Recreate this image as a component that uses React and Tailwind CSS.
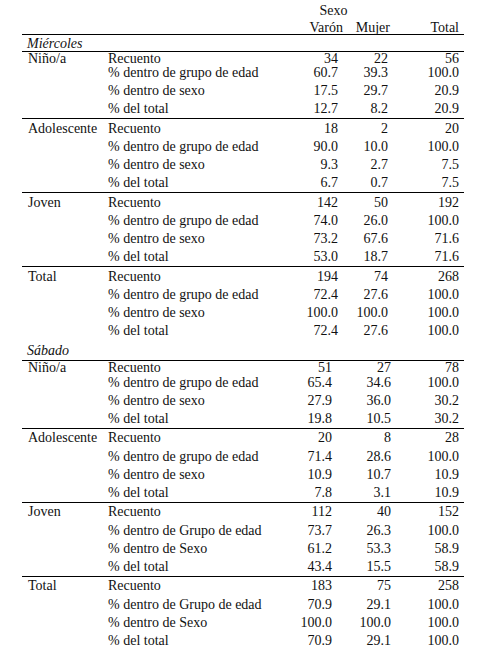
import React from 'react';

const lower = ['Recuento', '% dentro de grupo de edad', '% dentro de sexo', '% del total'];
const upper = ['Recuento', '% dentro de Grupo de edad', '% dentro de Sexo', '% del total'];

const sections = [
    {
        title: 'Miércoles',
        titleRow: 'h-[16px]',
        pad: { v: 'pr-[5px]', m: 'pr-[9px]' },
        firstH: 'h-[11.25px]',
        groups: [
            { name: 'Niño/a', labels: lower, values: [['34', '22', '56'], ['60.7', '39.3', '100.0'], ['17.5', '29.7', '20.9'], ['12.7', '8.2', '20.9']] },
            { name: 'Adolescente', labels: lower, values: [['18', '2', '20'], ['90.0', '10.0', '100.0'], ['9.3', '2.7', '7.5'], ['6.7', '0.7', '7.5']] },
            { name: 'Joven', labels: lower, values: [['142', '50', '192'], ['74.0', '26.0', '100.0'], ['73.2', '67.6', '71.6'], ['53.0', '18.7', '71.6']] },
            { name: 'Total', labels: lower, values: [['194', '74', '268'], ['72.4', '27.6', '100.0'], ['100.0', '100.0', '100.0'], ['72.4', '27.6', '100.0']] },
        ],
    },
    {
        title: 'Sábado',
        titleRow: 'h-[20px]',
        pad: { v: 'pr-[11px]', m: 'pr-[6px]' },
        firstH: 'h-[12px]',
        groups: [
            { name: 'Niño/a', labels: lower, values: [['51', '27', '78'], ['65.4', '34.6', '100.0'], ['27.9', '36.0', '30.2'], ['19.8', '10.5', '30.2']] },
            { name: 'Adolescente', labels: lower, values: [['20', '8', '28'], ['71.4', '28.6', '100.0'], ['10.9', '10.7', '10.9'], ['7.8', '3.1', '10.9']] },
            { name: 'Joven', labels: upper, values: [['112', '40', '152'], ['73.7', '26.3', '100.0'], ['61.2', '53.3', '58.9'], ['43.4', '15.5', '58.9']] },
            { name: 'Total', labels: upper, values: [['183', '75', '258'], ['70.9', '29.1', '100.0'], ['100.0', '100.0', '100.0'], ['70.9', '29.1', '100.0']] },
        ],
    },
];

const Group = ({ group, pad, first, firstH }) => (
    <div className="border-t border-black">
        {group.labels.map((label, i) => (
            <div
                key={i}
                className={`flex ${first && i === 0 ? `${firstH} items-start` : 'h-[18.25px] items-center'}`}
            >
                <div className="w-[85px] pl-[6px]">{i === 0 ? group.name : ''}</div>
                <div className="w-[170px] pl-[1px]">{label}</div>
                <div className={`w-[66px] text-right ${pad.v}`}>{group.values[i][0]}</div>
                <div className={`w-[54px] text-right ${pad.m}`}>{group.values[i][1]}</div>
                <div className="w-[67px] text-right pr-[5px]">{group.values[i][2]}</div>
            </div>
        ))}
    </div>
);

export default function App() {
    return (
        <div className="w-[485px] h-[650px] overflow-hidden bg-white text-[14px] leading-[13px] text-[#111] font-['Liberation_Serif',serif]">
            <div className="ml-[22px] w-[442px]">
                {/* header */}
                <div className="border-b border-black">
                    <div className="flex h-[20px] items-center">
                        <div className="w-[255px]" />
                        <div className="w-[120px] pr-[7px] text-center">Sexo</div>
                    </div>
                    <div className="flex h-[14px] items-center">
                        <div className="w-[255px]" />
                        <div className="w-[66px] text-right">Varón</div>
                        <div className="w-[54px] text-right pr-[7px]">Mujer</div>
                        <div className="w-[67px] text-right pr-[5px]">Total</div>
                    </div>
                </div>

                {sections.map((section) => (
                    <div key={section.title}>
                        <div className={`flex items-center pl-[5px] italic ${section.titleRow}`}>{section.title}</div>
                        {section.groups.map((group, gi) => (
                            <Group key={group.name} group={group} pad={section.pad} first={gi === 0} firstH={section.firstH} />
                        ))}
                    </div>
                ))}
            </div>
        </div>
    );
}
